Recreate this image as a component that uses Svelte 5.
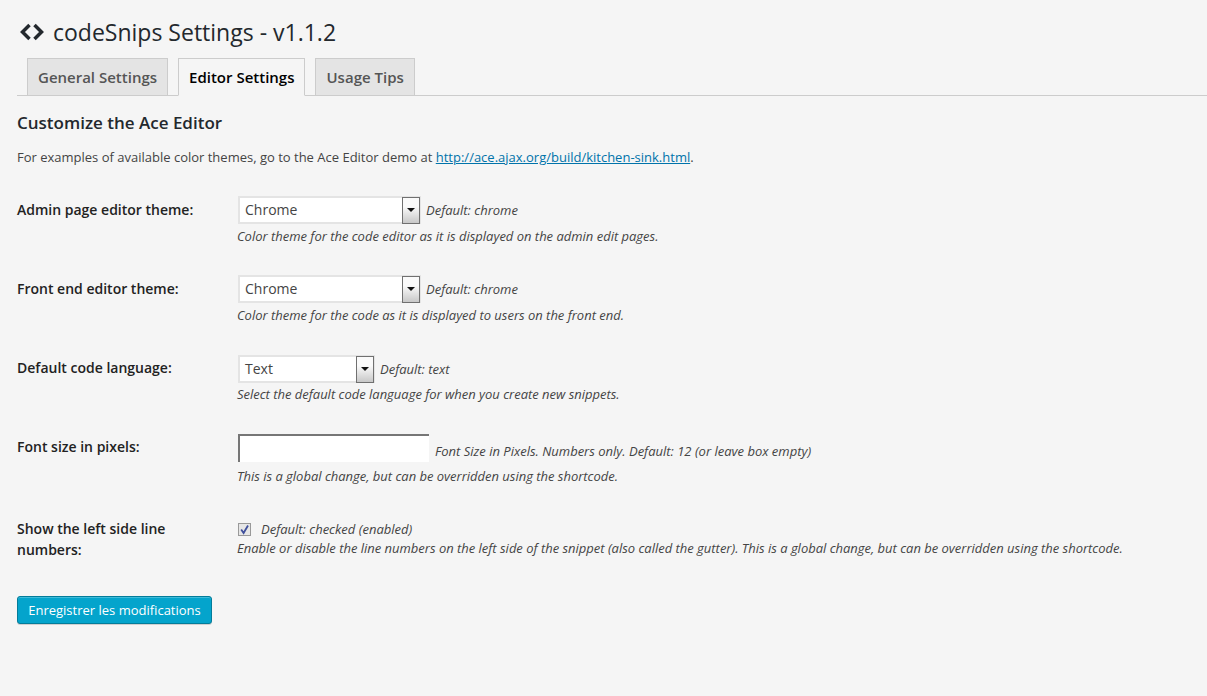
<script>
  const fields = [
    { label: 'Admin page editor theme:', value: 'Chrome', width: 183, hint: 'Default: chrome', desc: 'Color theme for the code editor as it is displayed on the admin edit pages.' },
    { label: 'Front end editor theme:', value: 'Chrome', width: 183, hint: 'Default: chrome', desc: 'Color theme for the code as it is displayed to users on the front end.' },
    { label: 'Default code language:', value: 'Text', width: 137, hint: 'Default: text', desc: 'Select the default code language for when you create new snippets.' }
  ];
</script>

<div class="wrap">
  <h2 class="title">
    <svg class="logo" width="26" height="18" viewBox="0 0 26 18" aria-hidden="true">
      <path d="M10.5 2 3.5 9l7 7M15.5 2l7 7-7 7" fill="none" stroke="#23282d" stroke-width="3.5" />
    </svg>
    codeSnips Settings - v1.1.2
  </h2>

  <div class="tabs">
    <span class="tab">General Settings</span>
    <span class="tab active">Editor Settings</span>
    <span class="tab">Usage Tips</span>
  </div>

  <h3>Customize the Ace Editor</h3>
  <p class="intro">For examples of available color themes, go to the Ace Editor demo at <a href="#top">http://ace.ajax.org/build/kitchen-sink.html</a>.</p>

  <div class="rows">
    {#each fields as f}
      <div class="row">
        <div class="label">{f.label}</div>
        <div class="field">
          <div class="line">
            <div class="select" style="width: {f.width}px">
              <span class="val">{f.value}</span>
              <span class="btn"><svg width="8" height="4" viewBox="0 0 8 4"><path d="M0 0h8L4 4z" fill="#111" /></svg></span>
            </div>
            <em class="hint">{f.hint}</em>
          </div>
          <p class="desc">{f.desc}</p>
        </div>
      </div>
    {/each}

    <div class="row size">
      <div class="label">Font size in pixels:</div>
      <div class="field">
        <div class="line tall">
          <input class="text" type="text" />
          <em class="hint wide">Font Size in Pixels. Numbers only. Default: 12 (or leave box empty)</em>
        </div>
        <p class="desc">This is a global change, but can be overridden using the shortcode.</p>
      </div>
    </div>

    <div class="row last">
      <div class="label">Show the left side line numbers:</div>
      <div class="field">
        <div class="line check">
          <span class="box">
            <svg width="11" height="11" viewBox="0 0 11 11"><path d="M2.2 5.5 4.6 9 9 1.5" fill="none" stroke="#3f4f9c" stroke-width="1.8" /></svg>
          </span>
          <em class="hint">Default: checked (enabled)</em>
        </div>
        <p class="desc">Enable or disable the line numbers on the left side of the snippet (also called the gutter). This is a global change, but can be overridden using the shortcode.</p>
      </div>
    </div>
  </div>

  <button class="save" type="button">Enregistrer les modifications</button>
</div>

<style>
  :global(body) {
    background: #f5f5f5;
    font-family: "Open Sans", sans-serif;
    color: #444;
    font-size: 13px;
  }

  .wrap {
    height: 696px;
    box-sizing: border-box;
    padding: 17px 0 0 17px;
    overflow: hidden;
  }

  .title {
    display: flex;
    align-items: center;
    gap: 8px;
    margin: 0;
    height: 30px;
    font-size: 23px;
    font-weight: 400;
    line-height: 30px;
    color: #23282d;
  }

  .logo {
    margin-left: 2px;
    flex: none;
  }

  .tabs {
    display: flex;
    gap: 10px;
    margin-top: 11px;
    padding-left: 10px;
    height: 37px;
    border-bottom: 1px solid #ccc;
  }

  .tab {
    box-sizing: border-box;
    height: 38px;
    padding: 0 10px;
    border: 1px solid #ccc;
    background: #e4e4e4;
    color: #555;
    font-size: 15px;
    font-weight: 600;
    line-height: 36px;
  }

  .tab.active {
    background: #f5f5f5;
    border-bottom-color: #f5f5f5;
    color: #000;
  }

  h3 {
    margin: 17px 0 0;
    font-size: 17px;
    font-weight: 600;
    line-height: 20px;
    color: #23282d;
  }

  .intro {
    margin: 14px 0 0;
    line-height: 20px;
  }

  a {
    color: #0073aa;
    text-decoration: underline;
  }

  .rows {
    margin-top: 29px;
  }

  .row {
    display: flex;
    height: 79px;
  }

  .row.size {
    height: 82px;
  }

  .row.last {
    height: 81px;
  }

  .label {
    width: 220px;
    padding-top: 3px;
    flex: none;
    box-sizing: border-box;
    padding-right: 20px;
    font-size: 14px;
    font-weight: 600;
    line-height: 21px;
    color: #222;
  }

  .line {
    display: flex;
    align-items: center;
    height: 28px;
  }

  /* third select sits a pixel lower than its label */
  .row:nth-child(3) .line {
    padding-top: 1px;
  }

  .row:nth-child(3) .desc {
    margin-top: 2px;
  }

  .line.tall {
    height: 30px;
    padding-top: 1px;
    align-items: flex-start;
  }

  .select {
    box-sizing: border-box;
    display: flex;
    align-items: center;
    height: 28px;
    margin-left: 1px;
    background: #fff;
    border: 2px solid #e4e4e4;
  }

  .val {
    flex: 1;
    padding: 0 0 2px 5px;
    font-size: 14px;
  }

  .btn {
    box-sizing: border-box;
    display: flex;
    align-items: center;
    justify-content: center;
    width: 18px;
    height: 27px;
    margin: 0 -1px 0 0;
    border: 1px solid #707070;
    background: linear-gradient(#fafafa 35%, #c8c8c8);
  }

  .hint {
    margin-left: 5px;
    font-size: 13px;
    line-height: 18px;
  }

  .hint.wide {
    margin: 8px 0 0 6px;
  }

  .text {
    box-sizing: border-box;
    width: 191px;
    height: 28px;
    margin: 0 0 0 1px;
    padding: 0;
    background: #fff;
    border: 0;
    border-top: 2px solid #767676;
    border-left: 2px solid #767676;
    outline: none;
  }

  .check {
    height: 18px;
    margin-top: 5px;
  }

  .box {
    box-sizing: border-box;
    display: flex;
    align-items: center;
    justify-content: center;
    width: 13px;
    height: 13px;
    margin-left: 1px;
    border: 1px solid #999;
    background: #e6e6e6;
  }

  .check .hint {
    margin-left: 10px;
  }

  .desc {
    margin: 3px 0 0;
    font-size: 12.97px;
    font-style: italic;
    line-height: 18px;
  }

  .check + .desc {
    margin-top: 1px;
  }

  .save {
    display: block;
    box-sizing: border-box;
    width: 195px;
    height: 28px;
    margin: 0;
    padding: 0;
    background: #04a4cc;
    border: 1px solid #037c9a;
    border-radius: 3px;
    box-shadow: inset 0 1px 0 rgba(120, 210, 230, 0.5), 0 1px 0 rgba(0, 0, 0, 0.15);
    color: #fff;
    font-family: inherit;
    font-size: 13px;
  }
</style>
